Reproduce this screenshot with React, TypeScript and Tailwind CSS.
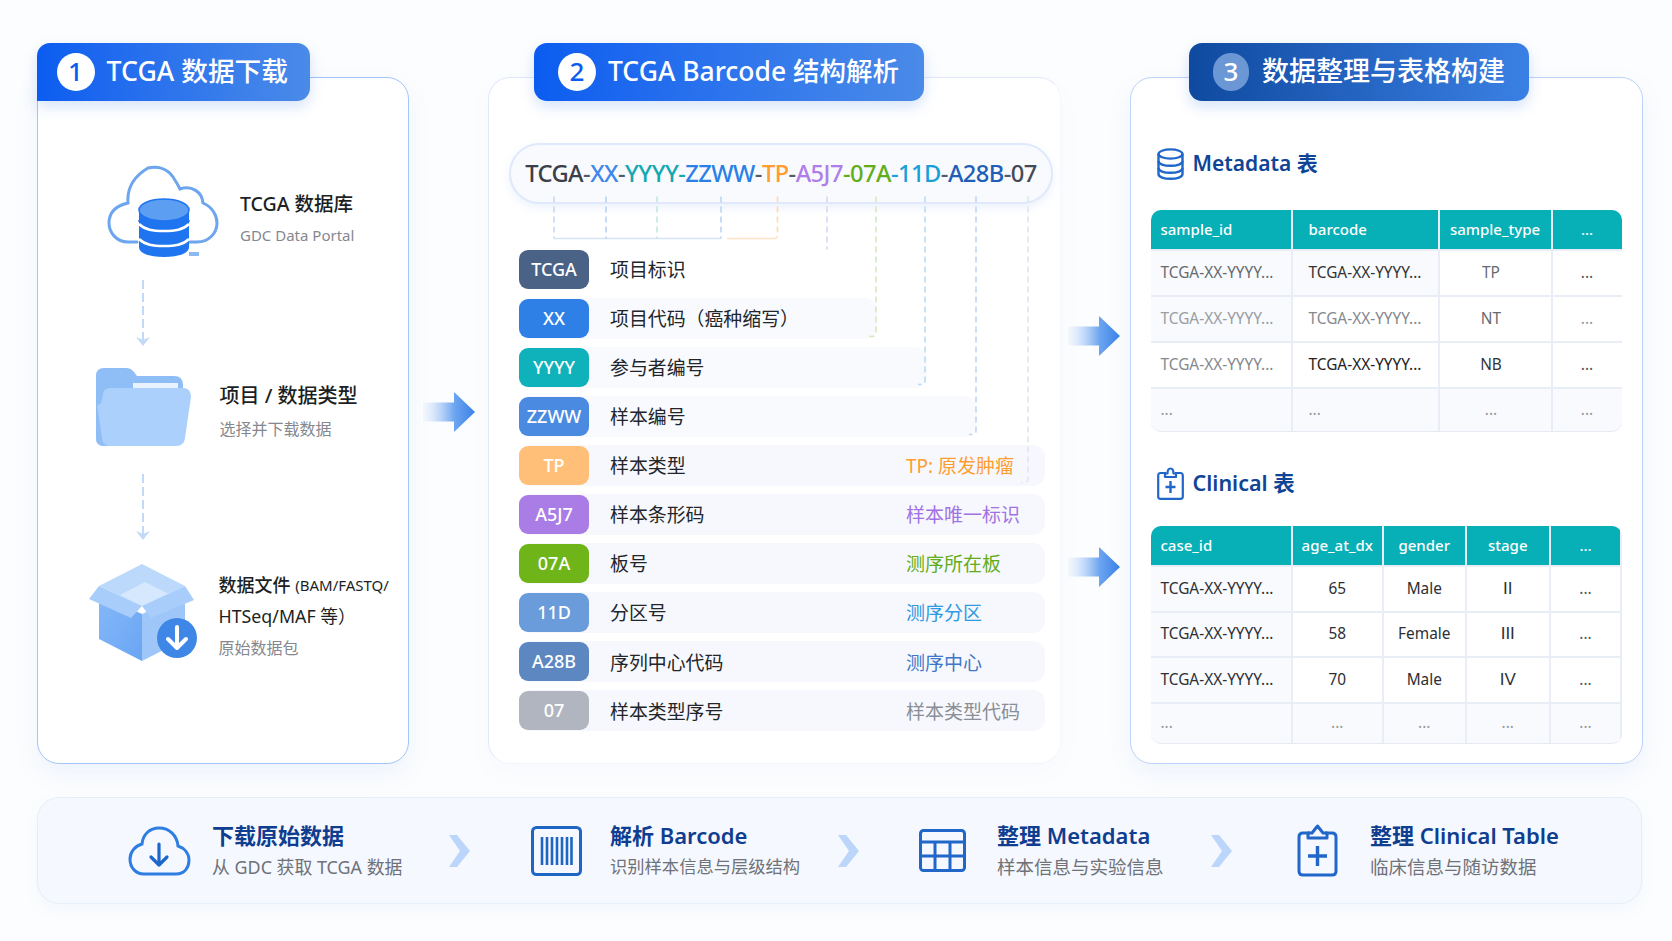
import React from "react";

const Arrow = () => (
  <svg width="52" height="40" viewBox="0 0 52 40" className="block">
    <defs>
      <linearGradient id="arrowFade" x1="0" x2="1" y1="0" y2="0">
        <stop offset="0" stopColor="#bcd6fb" stopOpacity="0.1" />
        <stop offset="0.6" stopColor="#6ea5f0" />
        <stop offset="1" stopColor="#3a82e8" />
      </linearGradient>
    </defs>
    <path d="M0 10.5H31V0L52 20L31 40V29.5H0Z" fill="url(#arrowFade)" />
  </svg>
);

const DashedDown = () => (
  <svg width="20" height="68" viewBox="0 0 20 68" className="ml-[95px] block">
    <path d="M10 0V62" stroke="#c3d9fa" strokeWidth="2" strokeDasharray="9 4" fill="none" />
    <path d="M3 57L10 66L17 57L10 60Z" fill="#c3d9fa" />
  </svg>
);

const CloudDb = () => (
  <svg width="112" height="94" viewBox="0 0 112 94" className="block shrink-0">
    <path d="M30 77H21C9 77 2 67 2 58C2 48 8 41 21 38C20 25 24 13 41 3C50 1 60 3 66 12C70 18 71 20 73 24C85 20 95 27 96 38C105 42 110 50 110 58C110 68 102 77 90 77H76" fill="none" stroke="#6da5ee" strokeWidth="3" strokeLinecap="round" />
    <path d="M32 46V82C32 89 44 92 57 92C70 92 82 89 82 82V46Z" fill="#1f74f0" />
    <ellipse cx="57" cy="45" rx="25" ry="11" fill="#5c9ff2" stroke="#1f74f0" strokeWidth="1.5" />
    <path d="M32 55C36 61 46 63 57 63C68 63 78 61 82 55" fill="none" stroke="#1f74f0" strokeWidth="3" />
    <path d="M32 59C38 65 46 66 57 66C68 66 76 65 82 59M32 74C38 80 46 81 57 81C68 81 76 80 82 74" fill="none" stroke="#ffffff" strokeWidth="2.5" />
    <path d="M82 89H92" stroke="#8db9f3" strokeWidth="4" />
  </svg>
);

const Folder = () => (
  <svg width="96" height="80" viewBox="0 0 96 80" className="block shrink-0">
    <path d="M0 9Q0 1 8 1H30Q35 1 38 5L41 9H78Q87 9 87 18V50H0Z" fill="#8fbdf5" />
    <path d="M37 16H82V32H37Z" fill="#e9f3ff" />
    <path d="M0 40V71Q0 79 8 79H80Q88 79 89 71L95 30Q95 21 87 21H14Q7 21 7 28L5 36Z" fill="#abd0fb" />
    <path d="M0 30V71Q0 79 8 79H14Q7 79 6 71Z" fill="#8fbdf5" />
  </svg>
);

const Box = () => (
  <svg width="108" height="97" viewBox="0 0 108 97" className="block shrink-0">
    <defs>
      <linearGradient id="boxLeft" x1="0" x2="1" y1="0" y2="1">
        <stop offset="0" stopColor="#85b8f8" />
        <stop offset="1" stopColor="#6aa5f3" />
      </linearGradient>
    </defs>
    <path d="M10 30L53 50V97L10 75Z" fill="url(#boxLeft)" />
    <path d="M53 50L96 30V75L53 97Z" fill="#9ec6f9" />
    <path d="M10 22L53 0L96 22L53 42Z" fill="#bcd9fc" />
    <path d="M31 31L56 18L80 30L53 42Z" fill="#d6e8fe" />
    <path d="M10 22L0 35L42 54L53 42Z" fill="#a9cdfb" />
    <path d="M96 22L105 36L62 54L53 42Z" fill="#a9cdfb" />
    <circle cx="88" cy="74" r="20" fill="#3f87e6" />
    <path d="M88 63V83M79 75L88 84L97 75" fill="none" stroke="#ffffff" strokeWidth="4" strokeLinecap="round" strokeLinejoin="round" />
  </svg>
);

const DbSmall = () => (
  <svg width="27" height="32" viewBox="0 0 27 32" className="block shrink-0" fill="none" stroke="#2067c9" strokeWidth="2.4">
    <ellipse cx="13.5" cy="6" rx="12" ry="4.6" />
    <path d="M1.5 6V26C1.5 29 7 30.8 13.5 30.8C20 30.8 25.5 29 25.5 26V6" />
    <path d="M1.5 13C1.5 16 7 17.8 13.5 17.8C20 17.8 25.5 16 25.5 13M1.5 20C1.5 23 7 24.8 13.5 24.8C20 24.8 25.5 23 25.5 20" />
  </svg>
);

const ClipSmall = () => (
  <svg width="27" height="33" viewBox="0 0 27 33" className="block shrink-0" fill="none" stroke="#2067c9" strokeWidth="2.2" strokeLinejoin="round">
    <path d="M9 6H3.5Q1.2 6 1.2 8.5V29.5Q1.2 31.8 3.5 31.8H23.5Q25.8 31.8 25.8 29.5V8.5Q25.8 6 23.5 6H18" />
    <path d="M8 10V6.5H10.5C10.5 3.5 11.5 1.5 13.5 1.5C15.5 1.5 16.5 3.5 16.5 6.5H19V10Z" />
    <path d="M13.5 14V26M8.5 20H18.5" strokeWidth="2.4" />
  </svg>
);

const CloudDown = () => (
  <svg width="63" height="50" viewBox="0 0 63 50" className="block shrink-0" fill="none">
    <path d="M16 48H48C57 48 61 41 61 34C61 27 56 22 50 20C49 9 41 2 31 2C22 2 15 8 14 18C7 20 2 26 2 33C2 42 8 48 16 48Z" stroke="#2f7de0" strokeWidth="3" />
    <path d="M31 18V39M23 31L31 39L39 31" stroke="#1c66cc" strokeWidth="3.2" strokeLinecap="round" strokeLinejoin="round" />
  </svg>
);

const BarcodeIcon = () => (
  <svg width="51" height="50" viewBox="0 0 51 50" className="block shrink-0" fill="none" stroke="#1f65c4">
    <rect x="1.5" y="1.5" width="48" height="47" rx="4" strokeWidth="3" />
    <path d="M11 11V39M16 11V39M21 11V39M26 11V39M31 11V39M36 11V39M40.5 11V39" strokeWidth="2.6" />
  </svg>
);

const TableIcon = () => (
  <svg width="47" height="43" viewBox="0 0 47 43" className="block shrink-0" fill="none" stroke="#2067c9" strokeWidth="3">
    <rect x="1.5" y="1.5" width="44" height="40" rx="3" />
    <path d="M1.5 13H45.5M1.5 27H45.5M16 13V41M31 13V41" />
  </svg>
);

const ClipIcon = () => (
  <svg width="41" height="53" viewBox="0 0 41 53" className="block shrink-0" fill="none" stroke="#2067c9" strokeWidth="3" strokeLinejoin="round">
    <path d="M13 9H6Q2 9 2 13V47Q2 51 6 51H35Q39 51 39 47V13Q39 9 35 9H28" />
    <path d="M11 14V9H15L20.5 2L26 9H30V14Z" />
    <path d="M20.5 22V42M11 32H30" strokeWidth="3.4" />
  </svg>
);

const Chevron = () => (
  <svg width="21" height="32" viewBox="0 0 21 32" className="block shrink-0">
    <path d="M0 0H8L21 16L8 32H0L11 16Z" fill="#bcd6fb" />
  </svg>
);

const Connectors = () => {
  const lines = [
    ["M555 197V239", "#c9d8f0"],
    ["M607 197V239", "#b9d3f6"],
    ["M658 197V239", "#c0e6e4"],
    ["M722 197V239", "#bcd4f5"],
    ["M778.5 197V236", "#ffd8ad"],
    ["M828 197V250", "#e0d2f6"],
    ["M877 197V333Q877 337 873 337H870", "#d6e8c2"],
    ["M926 197V381Q926 385 922 385H919", "#bbdcf5"],
    ["M977 197V431Q977 435 973 435H970", "#c2d5f3"],
    ["M1029 197V479Q1029 483 1025 483H1022", "#dfe5ef"],
  ];
  return (
    <svg width="573" height="520" viewBox="0 0 573 520" className="absolute left-0 top-0 pointer-events-none" fill="none">
      <g transform="translate(-490 -78.5)">
        <path d="M555 239H722" stroke="#d5e3f7" strokeWidth="1.6" />
        <path d="M728 239H775Q778.5 239 778.5 236" stroke="#ffe3c4" strokeWidth="1.6" />
        {lines.map(([d, c]) => (
          <path key={d} d={d} stroke={c} strokeWidth="1.6" strokeDasharray="6 4" />
        ))}
      </g>
    </svg>
  );
};

const rows = [
  { k: "TCGA", l: "项目标识", c: "bg-[#4a6285]", w: "w-[526px] bg-transparent" },
  { k: "XX", l: "项目代码（癌种缩写）", c: "bg-[#2f80e6]", w: "w-[358px] bg-[#f8fafe]" },
  { k: "YYYY", l: "参与者编号", c: "bg-[#0fb1ba]", w: "w-[408px] bg-[#f8fafe]" },
  { k: "ZZWW", l: "样本编号", c: "bg-[#4a8ae0]", w: "w-[457px] bg-[#f8fafe]" },
  { k: "TP", l: "样本类型", c: "bg-[#ffbf78]", w: "w-[526px] bg-[#f6f8fd]", r: "TP: 原发肿瘤", rc: "text-[#ff9d2e]" },
  { k: "A5J7", l: "样本条形码", c: "bg-[#a97ce6]", w: "w-[526px] bg-[#f6f8fd]", r: "样本唯一标识", rc: "text-[#a371e4]" },
  { k: "07A", l: "板号", c: "bg-[#6fb51a]", w: "w-[526px] bg-[#f6f8fd]", r: "测序所在板", rc: "text-[#63ad1a]" },
  { k: "11D", l: "分区号", c: "bg-[#6a9bda]", w: "w-[526px] bg-[#f6f8fd]", r: "测序分区", rc: "text-[#2f9ae0]" },
  { k: "A28B", l: "序列中心代码", c: "bg-[#5d87c0]", w: "w-[526px] bg-[#f6f8fd]", r: "测序中心", rc: "text-[#3f78c8]" },
  { k: "07", l: "样本类型序号", c: "bg-[#b0b5c0]", w: "w-[526px] bg-[#f6f8fd]", r: "样本类型代码", rc: "text-[#8a8e96]" },
];

const code: [string, string][] = [
  ["TCGA", "text-[#3a3f48]"], ["-", "text-[#555b66]"], ["XX", "text-[#3f87ea]"], ["-", "text-[#555b66]"],
  ["YYYY", "text-[#14a8b0]"], ["-", "text-[#14a8b0]"], ["ZZWW", "text-[#2a80e6]"], ["-", "text-[#555b66]"],
  ["TP", "text-[#ff9d2e]"], ["-", "text-[#555b66]"], ["A5J7", "text-[#b07eea]"], ["-", "text-[#63ad1a]"],
  ["07A", "text-[#63ad1a]"], ["-", "text-[#1a9fd8]"], ["11D", "text-[#1a9fd8]"], ["-", "text-[#555b66]"],
  ["A28B", "text-[#1f5fb8]"], ["-", "text-[#555b66]"], ["07", "text-[#444a55]"],
];

type Cell = { t: string; c: string; a?: string };
const Tbl = ({ cols, heights, head, body }: { cols: string; heights: string; head: Cell[]; body: Cell[][] }) => (
  <div className={"grid rounded-[10px] overflow-hidden border-b border-[#e5eaf3] text-[15.4px] bg-[#e9edf5] gap-[2px] " + cols + " " + heights}>
    {head.map((h, i) => (
      <div key={i} className={"flex items-center bg-[#07afb6] text-white text-[15px] font-medium " + (h.a ?? "")}>{h.t}</div>
    ))}
    {body.flat().map((b, i) => (
      <div key={i} className={"flex items-center " + b.c + " " + (b.a ?? "")}>{b.t}</div>
    ))}
  </div>
);

const L1 = "pl-[10px]";
const L2 = "pl-[16px]";
const C = "justify-center";
const bgA = "bg-[#f8fafd]";
const bgB = "bg-[#ffffff]";
const D = "TCGA-XX-YYYY...";

const meta = [
  [{ t: D, c: bgA + " text-[#666a70]", a: L1 }, { t: D, c: bgA + " text-[#333]", a: L2 }, { t: "TP", c: bgB + " text-[#666a70] pr-[8px]", a: C }, { t: "...", c: bgB + " text-[#555]", a: C }],
  [{ t: D, c: bgA + " text-[#9a9da3]", a: L1 }, { t: D, c: bgB + " text-[#85888e]", a: L2 }, { t: "NT", c: bgB + " text-[#666a70] pr-[8px]", a: C }, { t: "...", c: bgB + " text-[#999]", a: C }],
  [{ t: D, c: bgB + " text-[#85888e]", a: L1 }, { t: D, c: bgB + " text-[#222]", a: L2 }, { t: "NB", c: bgB + " text-[#333] pr-[8px]", a: C }, { t: "...", c: bgB + " text-[#555]", a: C }],
  [{ t: "...", c: bgA + " text-[#999]", a: L1 }, { t: "...", c: bgA + " text-[#999]", a: L2 }, { t: "...", c: bgA + " text-[#999] pr-[8px]", a: C }, { t: "...", c: bgA + " text-[#999]", a: C }],
];

const clinRow = (a: string, b: string, c: string) => [
  { t: D, c: bgA + " text-[#2c2f35]", a: L1 },
  { t: a, c: bgB + " text-[#2c2f35]", a: C },
  { t: b, c: bgB + " text-[#2c2f35]", a: C },
  { t: c, c: bgB + " text-[#2c2f35] text-[17px] font-['Liberation_Sans',sans-serif]", a: C },
  { t: "...", c: bgB + " text-[#555]", a: C },
];
const clin = [
  clinRow("65", "Male", "II"),
  clinRow("58", "Female", "III"),
  clinRow("70", "Male", "IV"),
  [{ t: "...", c: bgA + " text-[#999]", a: L1 }, ...[0, 1, 2, 3].map(() => ({ t: "...", c: bgA + " text-[#999]", a: C }))],
];

const Step = ({ title, sub, w, s }: { title: string; sub: string; w: string; s: string }) => (
  <div className={"flex flex-col shrink-0 " + w}>
    <span className="text-[22px] leading-[32px] font-semibold text-[#0f3d8f] whitespace-nowrap">{title}</span>
    <span className={"leading-[32px] text-[#6f7278] whitespace-nowrap " + s}>{sub}</span>
  </div>
);

export default function App() {
  return (
    <div className="w-[1672px] h-[941px] overflow-hidden bg-[#fcfdfe] pt-[77px] pl-[37px] font-['Noto_Sans','Noto_Sans_CJK_SC',sans-serif]">
      <div className="flex items-stretch h-[687px]">
        {/* Panel 1 */}
        <div className="relative w-[372px] h-full bg-white rounded-[22px] rounded-tl-none border-[1.5px] border-[#a3c5f8] shadow-[0_10px_24px_rgba(70,130,230,0.08)] pt-[86.5px]">
          <div className="absolute left-[-1.5px] top-[-35.5px] w-[273px] h-[58px] flex items-center pl-[20px] rounded-t-[13px] rounded-br-[13px] bg-gradient-to-r from-[#0a5cf0] to-[#4a8ae8] shadow-[0_6px_14px_rgba(70,130,230,0.22)]">
            <span className="flex items-center justify-center w-[38px] h-[38px] rounded-full bg-white text-[#0a5cf0] text-[26px] font-medium">1</span>
            <span className="ml-[12px] text-[26.7px] font-medium text-white whitespace-nowrap">TCGA 数据下载</span>
          </div>
          <div className="flex items-center pl-[69px] h-[94px]">
            <CloudDb />
            <div className="ml-[21px] flex flex-col pt-[14px]">
              <span className="text-[19.5px] leading-[32px] font-medium text-[#1c1f24]">TCGA 数据库</span>
              <span className="text-[15px] leading-[30px] text-[#85888e]">GDC Data Portal</span>
            </div>
          </div>
          <div className="mt-[21px]"><DashedDown /></div>
          <div className="flex items-center pl-[57.5px] mt-[19px] h-[80px]">
            <Folder />
            <div className="ml-[28px] flex flex-col pt-[12px]">
              <span className="text-[20px] leading-[32px] font-medium text-[#1c1f24]">项目 / 数据类型</span>
              <span className="text-[16px] leading-[32px] text-[#85888e] mt-[1px]">选择并下载数据</span>
            </div>
          </div>
          <div className="mt-[27px]"><DashedDown /></div>
          <div className="flex items-start pl-[50.5px] mt-[22px] h-[97px]">
            <Box />
            <div className="ml-[22px] flex flex-col mt-[6px]">
              <span className="flex items-center h-[31px] text-[18px] font-medium text-[#1c1f24] whitespace-nowrap">数据文件&nbsp;<span className="text-[15px] font-normal">(BAM/FASTQ/</span></span>
              <span className="flex items-center h-[31px] text-[17.8px] text-[#1c1f24] whitespace-nowrap">HTSeq/MAF 等）</span>
              <span className="flex items-center h-[33px] text-[16px] text-[#85888e]">原始数据包</span>
            </div>
          </div>
        </div>

        {/* Arrow 1 */}
        <div className="w-[79px] shrink-0 flex justify-center pt-[315px] pl-[1px]"><Arrow /></div>

        {/* Panel 2 */}
        <div className="relative w-[573px] h-full bg-white rounded-[22px] border-[1.5px] border-[#dfe9fb] border-r-[#f4f7fd] border-b-[#f0f4fb] shadow-[0_8px_24px_rgba(70,130,230,0.03)] pt-[64.5px] pl-[20px]">
          <div className="absolute left-[45px] top-[-35.5px] w-[390px] h-[58px] z-10 flex items-center pl-[24px] rounded-[13px] bg-gradient-to-r from-[#0a5cf0] to-[#4a8ae8] shadow-[0_6px_14px_rgba(70,130,230,0.22)]">
            <span className="flex items-center justify-center w-[38px] h-[38px] rounded-full bg-white text-[#0a5cf0] text-[26px] font-medium">2</span>
            <span className="ml-[12px] text-[26.5px] font-medium text-white whitespace-nowrap">TCGA Barcode 结构解析</span>
          </div>
          <div className="relative flex items-center justify-center w-[544px] h-[61px] pt-[2px] rounded-full bg-[#f8fafe] border-2 border-[#dfe9fb] shadow-[0_4px_10px_rgba(70,130,230,0.1)] text-[23.7px] tracking-[-0.55px] font-medium whitespace-nowrap">
            {code.map(([t, c], i) => <span key={i} className={c}>{t}</span>)}
          </div>
          <div className="relative flex flex-col gap-[8.1px] mt-[45px] ml-[10px]">
            {rows.map((r) => (
              <div key={r.k} className={"flex items-center h-[41px] rounded-[12px] " + r.w}>
                <span className={"flex items-center justify-center w-[70px] h-[39px] rounded-[9px] text-white text-[18px] font-medium shrink-0 " + r.c}>{r.k}</span>
                <span className="ml-[21px] w-[296px] shrink-0 pt-[2px] text-[18.9px] text-[#22252a] whitespace-nowrap">{r.l}</span>
                {r.r && <span className={"pt-[2px] text-[19px] whitespace-nowrap " + r.rc}>{r.r}</span>}
              </div>
            ))}
          </div>
          <Connectors />
        </div>

        {/* Arrow 2 & 3 */}
        <div className="w-[69px] shrink-0 flex flex-col items-center pt-[239px] pr-[3px] gap-[191px]"><Arrow /><Arrow /></div>

        {/* Panel 3 */}
        <div className="relative w-[513px] h-full bg-white rounded-[22px] border-[1.5px] border-[#bcd4f8] shadow-[0_10px_24px_rgba(70,130,230,0.08)] pt-[69.5px] pl-[19.5px]">
          <div className="absolute left-[58px] top-[-35.5px] w-[340px] h-[58px] flex items-center pl-[24px] rounded-[13px] bg-gradient-to-r from-[#0f4aa0] to-[#3a80e4] shadow-[0_6px_14px_rgba(70,130,230,0.22)]">
            <span className="flex items-center justify-center w-[36px] h-[38px] rounded-full bg-[#6b97d4] text-white text-[26px] font-medium">3</span>
            <span className="ml-[13px] text-[27px] font-medium text-white whitespace-nowrap">数据整理与表格构建</span>
          </div>
          <div className="flex items-center gap-[9px] ml-[6px] h-[32px]">
            <DbSmall />
            <span className="text-[21px] font-semibold text-[#0f4496]">Metadata 表</span>
          </div>
          <div className="mt-[30px] w-[471px]">
            <Tbl
              cols="grid-cols-[140px_145px_111px_69px]"
              heights="grid-rows-[39px_44px_44px_44px_42px]"
              head={[{ t: "sample_id", c: "", a: L1 }, { t: "barcode", c: "", a: L2 }, { t: "sample_type", c: "", a: C }, { t: "...", c: "", a: C }]}
              body={meta}
            />
          </div>
          <div className="flex items-center gap-[9px] ml-[6px] mt-[36px] h-[32px]">
            <ClipSmall />
            <span className="text-[21.5px] font-semibold text-[#0f4496]">Clinical 表</span>
          </div>
          <div className="mt-[26px] w-[471px]">
            <Tbl
              cols="grid-cols-[140px_89.5px_80.5px_82.5px_69px]"
              heights="grid-rows-[39px_44px_43px_44px_39px]"
              head={[{ t: "case_id", c: "", a: L1 }, { t: "age_at_dx", c: "", a: C }, { t: "gender", c: "", a: C }, { t: "stage", c: "", a: C }, { t: "...", c: "", a: C }]}
              body={clin}
            />
          </div>
        </div>
      </div>

      {/* Bottom bar */}
      <div className="flex items-center w-[1605px] h-[107px] mt-[33px] pl-[90px] rounded-[22px] bg-[#f5f8fe] border-[1.5px] border-[#e6eefb] shadow-[0_6px_16px_rgba(70,130,230,0.05)]">
        <CloudDown />
        <div className="w-[21px] shrink-0" />
        <Step title="下载原始数据" sub="从 GDC 获取 TCGA 数据" w="w-[237px]" s="text-[17.9px]" />
        <Chevron />
        <div className="w-[61px] shrink-0" />
        <BarcodeIcon />
        <div className="w-[28px] shrink-0" />
        <Step title="解析 Barcode" sub="识别样本信息与层级结构" w="w-[228px]" s="text-[17.3px]" />
        <Chevron />
        <div className="w-[60px] shrink-0" />
        <TableIcon />
        <div className="w-[31px] shrink-0" />
        <Step title="整理 Metadata" sub="样本信息与实验信息" w="w-[214px]" s="text-[18.5px]" />
        <Chevron />
        <div className="w-[65px] shrink-0" />
        <ClipIcon />
        <div className="w-[32px] shrink-0" />
        <Step title="整理 Clinical Table" sub="临床信息与随访数据" w="w-[260px]" s="text-[18.5px]" />
      </div>
    </div>
  );
}
